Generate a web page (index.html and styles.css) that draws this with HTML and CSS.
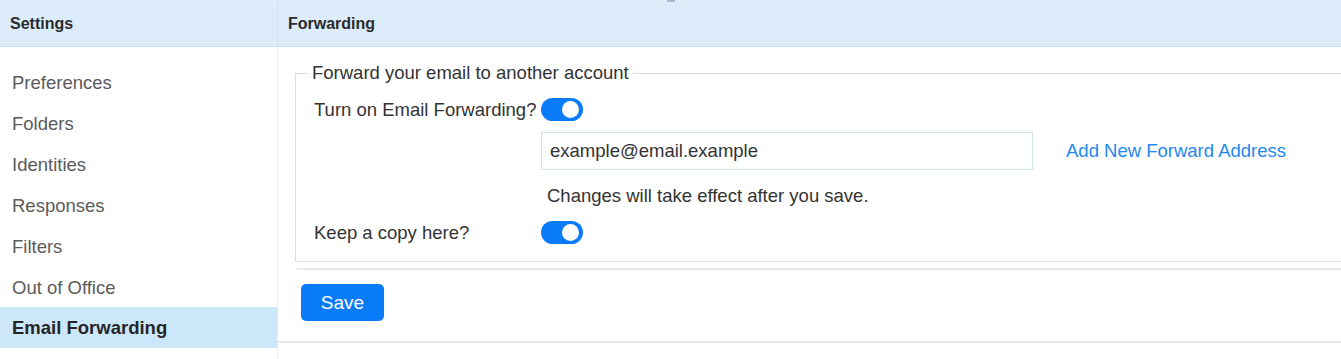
FILE: index.html
```html
<!DOCTYPE html>
<html lang="en">
<head>
    <meta charset="UTF-8">
    <meta name="viewport" content="width=device-width, initial-scale=1.0">
    <title>Settings - Forwarding</title>
    <link rel="stylesheet" href="styles.css">
</head>
<body>
    <div class="app">
        <span class="grip"></span>

        <aside class="sidebar">
            <div class="panel-head">Settings</div>
            <nav class="nav">
                <a class="nav-item">Preferences</a>
                <a class="nav-item">Folders</a>
                <a class="nav-item">Identities</a>
                <a class="nav-item">Responses</a>
                <a class="nav-item">Filters</a>
                <a class="nav-item">Out of Office</a>
                <a class="nav-item nav-active">Email Forwarding</a>
            </nav>
        </aside>

        <main class="main">
            <div class="panel-head">Forwarding</div>

            <div class="content">
                <fieldset class="forward-box">
                    <legend>Forward your email to another account</legend>

                    <div class="form-row">
                        <span class="label">Turn on Email Forwarding?</span>
                        <span class="switch"><span class="knob"></span></span>
                    </div>

                    <div class="form-row address-row">
                        <span class="label"></span>
                        <div class="address">
                            <input class="text-input" type="text" value="example@email.example">
                            <a class="link">Add New Forward Address</a>
                        </div>
                    </div>

                    <div class="form-row note-row">
                        <span class="label"></span>
                        <p class="note">Changes will take effect after you save.</p>
                    </div>

                    <div class="form-row">
                        <span class="label">Keep a copy here?</span>
                        <span class="switch"><span class="knob"></span></span>
                    </div>
                </fieldset>

                <div class="actions">
                    <button class="btn-save">Save</button>
                </div>
            </div>
        </main>
    </div>
</body>
</html>
```

FILE: styles.css
```css
:root {
    --head-bg: #dcecfa;
    --head-line: #c6def1;
    --accent: #0a7cfa;
    --link: #2389f0;
    --text: #333;
    --muted: #5b5b5b;
}

* {
    margin: 0;
    padding: 0;
    box-sizing: border-box;
}

body {
    font-family: 'Liberation Sans', Arial, sans-serif;
    color: var(--text);
    background: #fff;
    overflow: hidden;
}

.app {
    position: relative;
    display: flex;
    height: 359px;
}

.grip {
    position: absolute;
    top: 0;
    left: 667px;
    width: 8px;
    height: 2px;
    background: #a8bcd0;
}

.panel-head {
    height: 47px;
    padding: 0 10px;
    display: flex;
    align-items: center;
    background: var(--head-bg);
    border-top: 1px solid #e2ebf2;
    border-bottom: 1px solid var(--head-line);
    font-size: 16px;
    font-weight: bold;
    color: #2b2b2b;
}

/* Sidebar */
.sidebar {
    width: 278px;
    flex-shrink: 0;
    border-right: 1px solid #e3edf5;
}

.sidebar .panel-head {
    border-right: 1px solid #cfe3f3;
    margin-right: -1px;
}

.nav {
    padding-top: 14px;
}

.nav-item {
    display: flex;
    align-items: center;
    height: 41px;
    padding: 3px 12px 0;
    font-size: 18.5px;
    color: var(--muted);
    cursor: pointer;
}

.nav-active {
    background: #cce6fa;
    color: #262626;
    font-weight: bold;
    padding-top: 1px;
}

/* Main */
.main {
    flex: 1;
    min-width: 0;
    overflow: hidden;
}

.content {
    border-bottom: 2px solid #e8e8e8;
    padding-bottom: 20px;
}

.forward-box {
    margin: 15px -6px 0 17px;
    padding: 12px 0 15px 18px;
    border: 1px solid #dedede;
}

.forward-box legend {
    margin-left: -5px;
    padding: 0 3px;
    font-size: 18.5px;
    line-height: 22px;
    color: var(--text);
}

.form-row {
    display: grid;
    grid-template-columns: 227px 1fr;
    align-items: center;
    min-height: 27px;
    font-size: 18.5px;
}

.address-row {
    margin-top: 9px;
}

.note-row {
    margin-top: 12px;
    margin-bottom: 10px;
}

.address {
    display: flex;
    align-items: center;
    gap: 33px;
}

.text-input {
    width: 492px;
    height: 38px;
    padding: 0 8px;
    border: 1px solid #cfe2f2;
    font-family: inherit;
    font-size: 18.5px;
    color: var(--text);
    outline: none;
}

.link {
    color: var(--link);
    font-size: 18.5px;
    cursor: pointer;
}

.note {
    margin-left: 6px;
    line-height: 22px;
}

.switch {
    position: relative;
    width: 42px;
    height: 23px;
    border-radius: 12px;
    background: var(--accent);
}

.knob {
    position: absolute;
    top: 3px;
    right: 4px;
    width: 17px;
    height: 17px;
    border-radius: 50%;
    background: #fff;
}

.actions {
    margin: 6px 0 0 19px;
    padding-top: 14px;
    border-top: 2px solid #e8e8e8;
}

.btn-save {
    width: 83px;
    height: 37px;
    margin-left: 4px;
    border: none;
    border-radius: 5px;
    background: var(--accent);
    color: #fff;
    font-family: inherit;
    font-size: 19px;
    cursor: pointer;
}
```
